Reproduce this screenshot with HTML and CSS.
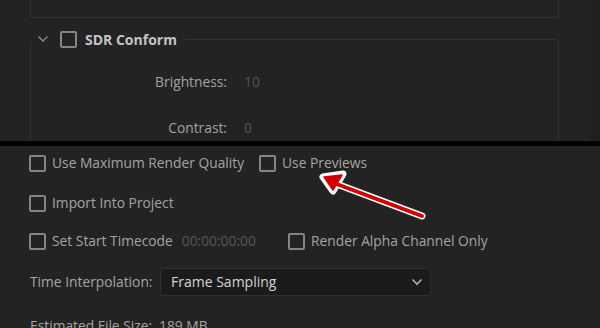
FILE: index.html
```html
<!DOCTYPE html>
<html lang="en">

<head>
  <meta charset="UTF-8">
  <meta name="viewport" content="width=device-width, initial-scale=1.0">
  <title>Export Settings</title>
  <link rel="stylesheet" href="styles.css">
</head>

<body>
  <div class="panel-top">
    <div class="prev-box"></div>

    <fieldset class="group">
      <legend class="group-head">
        <svg class="twisty" width="12" height="8" viewBox="0 0 12 8">
          <path d="M1.5 1.5 L6 6 L10.5 1.5" fill="none" stroke="#8c8c8c" stroke-width="1.4" />
        </svg>
        <span class="check"></span>
        <span class="group-title">SDR Conform</span>
      </legend>

      <div class="fields">
        <label class="field-label">Brightness:</label>
        <span class="field-value">10</span>
        <label class="field-label">Contrast:</label>
        <span class="field-value">0</span>
      </div>
    </fieldset>
  </div>

  <div class="panel-bottom">
    <div class="row row-1">
      <div class="opt opt-wide"><span class="check"></span><span>Use Maximum Render Quality</span></div>
      <div class="opt"><span class="check"></span><span>Use Previews</span></div>
    </div>

    <div class="row row-2">
      <div class="opt"><span class="check"></span><span>Import Into Project</span></div>
    </div>

    <div class="row row-3">
      <div class="opt opt-timecode">
        <span class="check"></span><span>Set Start Timecode</span>
        <span class="timecode">00:00:00:00</span>
      </div>
      <div class="opt"><span class="check"></span><span>Render Alpha Channel Only</span></div>
    </div>

    <div class="row row-4">
      <span class="select-label">Time Interpolation:</span>
      <div class="select">
        <span>Frame Sampling</span>
        <svg width="12" height="8" viewBox="0 0 12 8">
          <path d="M1.5 1.5 L6 6 L10.5 1.5" fill="none" stroke="#b0b0b0" stroke-width="1.6" />
        </svg>
      </div>
    </div>

    <div class="row row-5">
      <span>Estimated File Size:</span>
      <span class="size">189 MB</span>
    </div>

    <!-- annotation arrow pointing at "Use Previews" -->
    <svg class="arrow" width="600" height="328" viewBox="0 0 600 328">
      <g stroke="#ffffff" stroke-width="7" stroke-linejoin="round" stroke-linecap="round" fill="#ffffff">
        <path d="M422 216 L334 183" />
        <path d="M323 177 L343 174 L333 191 Z" />
      </g>
      <g stroke="#d10000" stroke-width="4" stroke-linejoin="round" stroke-linecap="round" fill="#d10000">
        <path d="M422 216 L334 183" />
        <path d="M324 177 L342 175 L333 190 Z" stroke-width="1.5" />
      </g>
    </svg>
  </div>
</body>

</html>
```

FILE: styles.css
```css
body {
  margin: 0;
  background-color: #232323;
  font-family: "Open Sans", "Noto Sans", sans-serif;
  font-size: 13.8px;
  color: #a3a3a3;
  overflow: hidden;
}

.panel-top {
  height: 141px;
  overflow: hidden;
  border-bottom: 5px solid #000000;
  background: linear-gradient(to right, #232323 586px, #1e1e1e 600px);
}

.prev-box {
  box-sizing: border-box;
  margin-left: 30px;
  width: 529px;
  height: 18px;
  border: 1px solid #343434;
  border-top: none;
  border-radius: 0 0 4px 4px;
}

.group {
  box-sizing: border-box;
  margin: 11px 0 0 30px;
  width: 529px;
  height: 160px;
  padding: 0;
  border: 1px solid #343434;
  border-radius: 4px;
}

.group-head {
  display: flex;
  align-items: center;
  height: 20px;
  padding: 0 8px 0 6px;
}

.twisty {
  margin-right: 11px;
}

.group-title {
  margin-left: 8px;
  font-weight: bold;
  font-size: 14px;
  color: #c4c4c4;
}

.check {
  box-sizing: border-box;
  display: inline-block;
  flex: none;
  width: 17px;
  height: 17px;
  border: 2px solid #858585;
  border-radius: 2px;
}

.fields {
  display: grid;
  grid-template-columns: 196px auto;
  column-gap: 17px;
  row-gap: 26px;
  padding-top: 23px;
  line-height: 20px;
}

.field-label {
  text-align: right;
}

.field-value {
  color: #555555;
}

.panel-bottom {
  position: relative;
  padding: 7px 0 0 29px;
  line-height: 20px;
}

.row {
  display: flex;
  align-items: center;
  height: 20px;
}

.row-2 {
  margin-top: 20px;
}

.row-3 {
  margin-top: 18px;
}

.row-4 {
  margin-top: 21px;
}

.row-5 {
  margin-top: 24px;
  padding-left: 1px;
}

.opt {
  display: flex;
  align-items: center;
  gap: 6px;
}

.opt-wide {
  width: 230px;
}

.opt-timecode {
  width: 259px;
}

.timecode {
  margin-left: 3px;
  color: #555555;
}

.select-label {
  width: 130px;
  padding-left: 1px;
}

.select {
  box-sizing: border-box;
  display: flex;
  align-items: center;
  justify-content: space-between;
  width: 271px;
  height: 28px;
  padding: 0 7px 0 10px;
  background-color: #1b1b1b;
  border: 1px solid #313131;
  border-radius: 3px;
  color: #d4d4d4;
  font-size: 14px;
}

.size {
  margin-left: 7px;
}

.arrow {
  position: absolute;
  top: -146px;
  left: 0;
}
```
